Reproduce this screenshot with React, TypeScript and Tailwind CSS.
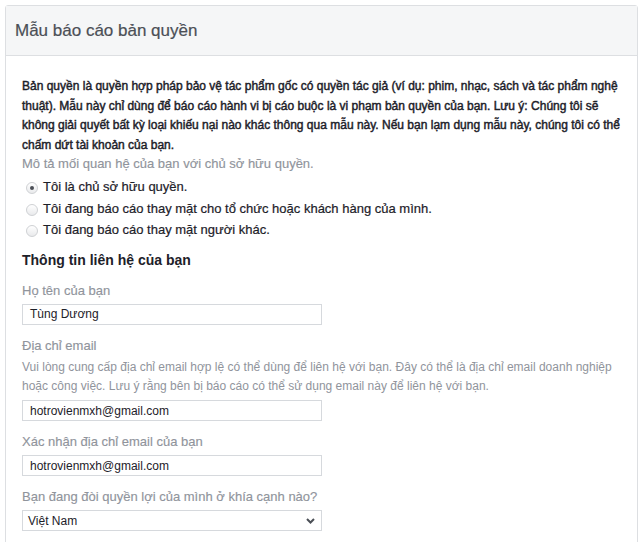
import React from 'react';

const Radio = ({ checked, label }: { checked?: boolean; label: string }) => (
    <div className="flex h-[21.5px] items-center">
        <span className="ml-[4px] mt-[3px] flex h-[12px] w-[12px] shrink-0 items-center justify-center rounded-full border border-[#cfd1d4] bg-gradient-to-b from-white to-[#e9eaec]">
            {checked && <span className="h-[4px] w-[4px] rounded-full bg-[#4b4f56]" />}
        </span>
        <span className="ml-[5px] text-[13px] text-[#1d2129] [-webkit-text-stroke:0.2px_#1d2129]">{label}</span>
    </div>
);

const Field = ({ label, children }: { label: string; children: React.ReactNode }) => (
    <div className="mt-[12px]">
        <div className="text-[13px] leading-[18px] text-[#90949c] [-webkit-text-stroke:0.15px_#90949c]">{label}</div>
        {children}
    </div>
);

const TextBox = ({ value }: { value: string }) => (
    <div className="mt-[4px] flex h-[21px] w-[300px] items-center border border-[#d6d9dd] bg-white px-[7px] text-[12px] text-[#1d2129]">
        {value}
    </div>
);

export default function App() {
    return (
        <div className="min-h-screen bg-white pl-[5px] pt-[5px] font-['Liberation_Sans',Arial,sans-serif]">
            <div className="w-[633px] rounded-[3px] border border-[#dddfe2] bg-white">
                <div className="flex h-[50px] items-center border-b border-[#dddfe2] bg-[#f5f6f7] px-[9px]">
                    <h1 className="text-[17px] text-[#4b4f56] [-webkit-text-stroke:0.2px_#4b4f56]">Mẫu báo cáo bản quyền</h1>
                </div>

                <div className="px-[16px] pb-[30px] pt-[21px]">
                    {/* semi-bold look at regular width */}
                    <p className="text-[12px] leading-[19.5px] text-[#1d2129] [-webkit-text-stroke:0.45px_#1d2129]">
                        Bản quyền là quyền hợp pháp bảo vệ tác phẩm gốc có quyền tác giả (ví dụ: phim, nhạc, sách và tác phẩm nghệ
                        thuật). Mẫu này chỉ dùng để báo cáo hành vi bị cáo buộc là vi phạm bản quyền của bạn. Lưu ý: Chúng tôi sẽ
                        không giải quyết bất kỳ loại khiếu nại nào khác thông qua mẫu này. Nếu bạn lạm dụng mẫu này, chúng tôi có thể
                        chấm dứt tài khoản của bạn.
                    </p>

                    <div className="text-[13px] leading-[18px] text-[#90949c] [-webkit-text-stroke:0.15px_#90949c]">
                        Mô tả mối quan hệ của bạn với chủ sở hữu quyền.
                    </div>
                    <div className="mt-[3px]">
                        <Radio checked label="Tôi là chủ sở hữu quyền." />
                        <Radio label="Tôi đang báo cáo thay mặt cho tổ chức hoặc khách hàng của mình." />
                        <Radio label="Tôi đang báo cáo thay mặt người khác." />
                    </div>

                    <h2 className="mt-[9px] text-[14px] font-bold leading-[20px] text-[#1d2129]">
                        Thông tin liên hệ của bạn
                    </h2>

                    <div className="mt-[1px]">
                        <Field label="Họ tên của bạn">
                            <TextBox value="Tùng Dương" />
                        </Field>
                    </div>

                    <Field label="Địa chỉ email">
                        <p className="mt-[3.5px] text-[12px] leading-[19px] text-[#90949c]">
                            Vui lòng cung cấp địa chỉ email hợp lệ có thể dùng để liên hệ với bạn. Đây có thể là địa chỉ email doanh nghiệp
                            hoặc công việc. Lưu ý rằng bên bị báo cáo có thể sử dụng email này để liên hệ với bạn.
                        </p>
                        <TextBox value="hotrovienmxh@gmail.com" />
                    </Field>

                    <Field label="Xác nhận địa chỉ email của bạn">
                        <TextBox value="hotrovienmxh@gmail.com" />
                    </Field>

                    <Field label="Bạn đang đòi quyền lợi của mình ở khía cạnh nào?">
                        <div className="mt-[4px] flex h-[21px] w-[300px] items-center justify-between border border-[#d6d9dd] bg-white pl-[5px] pr-[6px] text-[12px] text-[#1d2129]">
                            <span>Việt Nam</span>
                            <svg width="9" height="6" viewBox="0 0 9 6" fill="none">
                                <polyline points="1,1 4.5,4.5 8,1" stroke="#4b4f56" strokeWidth="2" />
                            </svg>
                        </div>
                    </Field>
                </div>
            </div>
        </div>
    );
}
